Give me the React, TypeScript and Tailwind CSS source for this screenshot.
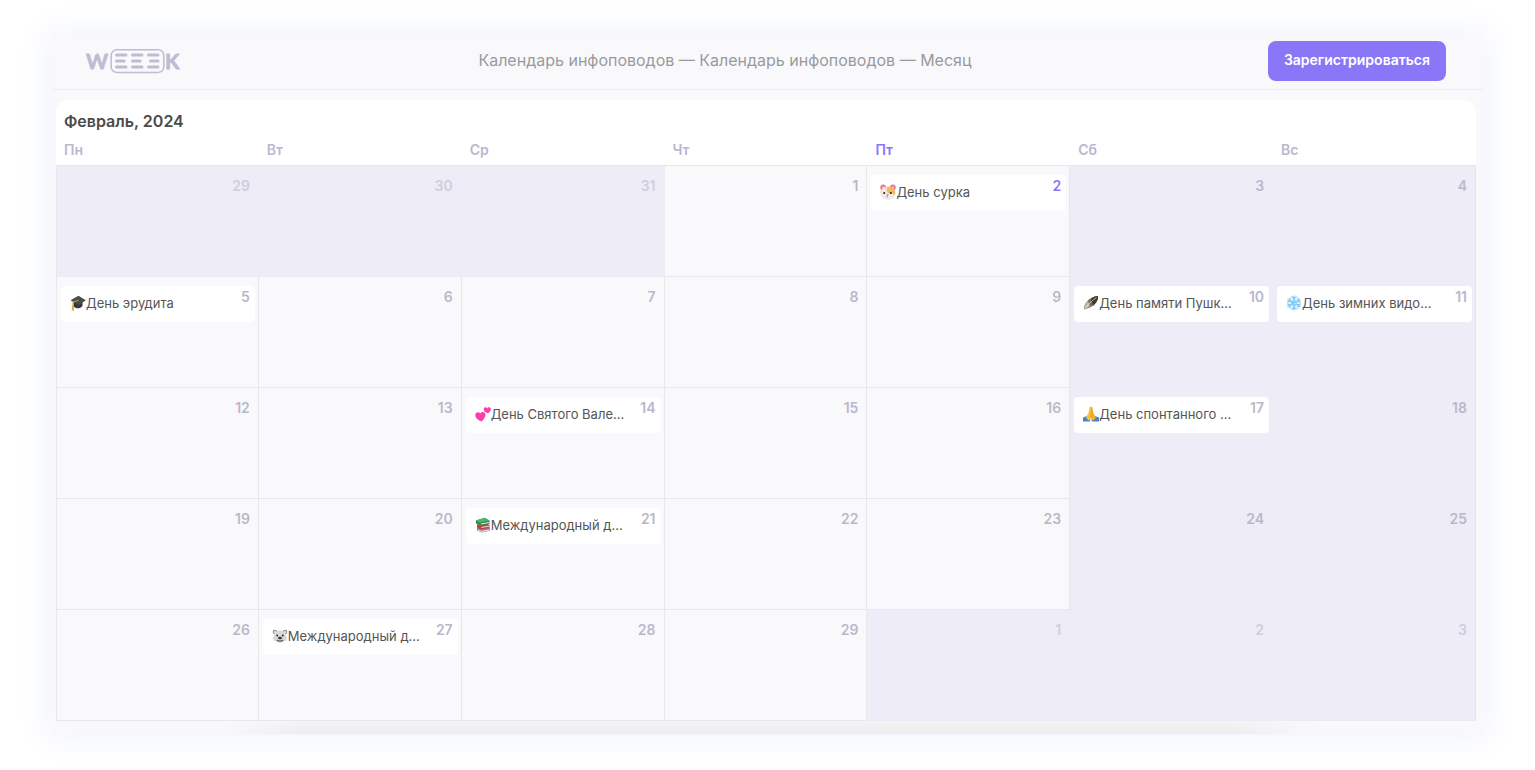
import { ReactNode } from "react";
import clsx from "clsx";

interface CalendarEvent {
  title: string;
  icon: ReactNode;
}

interface Day {
  day: number;
  muted?: boolean; // day of the previous or the next month
  event?: CalendarEvent;
}

const TODAY = 2;
const WEEKDAYS = ["Пн", "Вт", "Ср", "Чт", "Пт", "Сб", "Вс"];

// ICONS (16x16)
const hamster = (
  <>
    <circle cx="3.2" cy="3.4" r="2.9" fill="#e8788c" />
    <circle cx="12.8" cy="3.4" r="2.9" fill="#e8788c" />
    <circle cx="3.4" cy="3.8" r="1.5" fill="#f9b9c0" />
    <circle cx="12.6" cy="3.8" r="1.5" fill="#f9b9c0" />
    <ellipse cx="8" cy="9" rx="7.4" ry="6.3" fill="#f6b765" />
    <path d="M.6 9C1 5 4 3 7 3c-1 3 0 5 1 6 2 1 5 0 7 2-.5 3-3 4.500-7 4.500S.6 13 .6 9z" fill="#eeebe6" />
    <circle cx="4.2" cy="9" r="1" fill="#222" />
    <circle cx="10.8" cy="9" r="1" fill="#222" />
    <ellipse cx="7.4" cy="11" rx="1.2" ry=".8" fill="#e77a7f" />
    <path d="M7.4 11.6v2" stroke="#9a6a50" strokeWidth=".6" />
  </>
);

const graduationCap = (
  <>
    <path d="M3.5 7v4.5c2.5 2.4 6.5 2.7 9-.5V6z" fill="#34373a" />
    <path d="M.5 5.2 8.5.8l7.3 4.4-7 5z" fill="#484c4f" />
    <path d="M8.5 5.2 3 7.2v4" stroke="#e79b32" fill="none" />
    <path d="M2.2 10h1.6l.3 5.5H1.7z" fill="#f0a436" />
  </>
);

const feather = (
  <>
    <path d="M1 14.5C1 8 6 2 15 1c.5 5-4 11-11 12.5z" fill="#776f5d" />
    <path d="M8 4c2-2 4-2.8 7-3 .3 4-2 7.5-5 9.7z" fill="#423a2c" />
    <path d="M1.5 13.5C1.5 10.5 3 8 5 6l2 5.5c-1.3.8-3 1.600-4 1.8z" fill="#c2bba9" />
    <path d="M.8 15.2C4 11 8 6 13.5 2.5" stroke="#ece7da" strokeWidth=".7" fill="none" />
  </>
);

const snowflake = (
  <g stroke="#7cc8f3" strokeWidth="1.1" strokeLinecap="round" fill="none">
    <circle cx="8" cy="8" r="7" fill="#dff2fd" stroke="none" />
    <path d="M8 .8v14.4M1.8 4.4l12.4 7.2M1.8 11.6l12.4-7.2" />
    <path d="m5.8 1.8 2.2 2 2.2-2M5.8 14.2l2.2-2 2.2 2M1.5 7l2.9-.9-.7-2.9M14.5 9l-2.9.9.7 2.9M1.5 9l2.9.9-.7 2.9M14.5 7l-2.9-.9.7-2.9" />
    <circle cx="8" cy="8" r="2.3" />
  </g>
);

const hearts = (
  <>
    <path d="M6.500 15.5C2.5 14 .2 11.700.3 8.900c.1-2.700 3.500-3.600 4.900-1.300 1.800-2.600 5.400-1.500 5.300 1.100-.1 2.500-1.800 4.800-4 6.800z" fill="#fb3fa8" />
    <path d="M13.3 7.200C10.500 6.500 8.500 5 8.700 2.900c.2-1.900 2.700-2.200 3.500-.5C13 .6 15.700.8 15.800 2.800c0 1.700-1.100 3.200-2.500 4.400z" fill="#fb3fa8" />
  </>
);

const books = (
  <>
    <path d="m2 11 10-1.5 3 1.8v2.5l-8.500 1.700L2 13.5z" fill="#8c86a5" />
    <path d="m3 13 3.5 1.4 8-1.5" stroke="#eee" fill="none" />
    <path d="m2 7.5 10-1L14.500 8v3l-9 1.500-3.500-2z" fill="#d2393f" />
    <path d="m6.5 10.400 7.500-1.200" stroke="#f3dcd6" />
    <path d="m.8 3.5 9-2.7 4.700 2.7V7L5 8.500l-4-2z" fill="#2f8d50" />
    <path d="m.8 3.5 9-2.7 4.700 2.7L5 5.500z" fill="#56b36b" />
    <path d="m6 6.900 8-1.300" stroke="#e9eee5" />
  </>
);

const hands = (
  <>
    <path d="M0 11.500 4 10l3.500 3.500-.5 2H0zM16 11.500 12 10l-3.500 3.500.5 2h7z" fill="#4a86c5" />
    <path d="M7.800.5c-1 0-1.300 1-1.500 2.500L5.500 7 3 11.500l2.500 3c1.600-.5 2.300-1.700 2.500-3z" fill="#fbc33b" />
    <path d="M8.200.5c1 0 1.300 1 1.500 2.500l.8 4 2.500 4.500-2.500 3C8.900 14 8.200 12.800 8 11.500z" fill="#f3ac2c" />
    <path d="M8 1v11" stroke="#d28c22" strokeWidth=".6" />
  </>
);

const polarBear = (
  <>
    <circle cx="3" cy="4" r="2.3" fill="#96999b" />
    <circle cx="13" cy="4" r="2.3" fill="#96999b" />
    <circle cx="3.2" cy="4.3" r="1.2" fill="#dfe1e2" />
    <circle cx="12.8" cy="4.3" r="1.2" fill="#dfe1e2" />
    <path d="M8 2.500c4 0 5.500 2.500 6 5.500.8 1 1.500 2 1.200 3C14 13.500 11 14.500 8 14.500S2 13.500.8 11C.5 10 1.200 9 2 8c.5-3 2-5.500 6-5.500z" fill="#d7d9da" />
    <circle cx="5.2" cy="7.5" r=".9" fill="#222" />
    <circle cx="10.8" cy="7.5" r=".9" fill="#222" />
    <ellipse cx="8" cy="10" rx="1.9" ry="1.3" fill="#2c2d2e" />
    <path d="M5 12c1.500 1.500 4.500 1.500 6 0" stroke="#55585a" strokeWidth="1.2" fill="none" />
  </>
);

const WEEKS: Day[][] = [
  [
    { day: 29, muted: true },
    { day: 30, muted: true },
    { day: 31, muted: true },
    { day: 1 },
    { day: 2, event: { title: "День сурка", icon: hamster } },
    { day: 3 },
    { day: 4 },
  ],
  [
    { day: 5, event: { title: "День эрудита", icon: graduationCap } },
    { day: 6 },
    { day: 7 },
    { day: 8 },
    { day: 9 },
    { day: 10, event: { title: "День памяти Пушк...", icon: feather } },
    { day: 11, event: { title: "День зимних видо...", icon: snowflake } },
  ],
  [
    { day: 12 },
    { day: 13 },
    { day: 14, event: { title: "День Святого Вале...", icon: hearts } },
    { day: 15 },
    { day: 16 },
    { day: 17, event: { title: "День спонтанного ...", icon: hands } },
    { day: 18 },
  ],
  [
    { day: 19 },
    { day: 20 },
    { day: 21, event: { title: "Международный д...", icon: books } },
    { day: 22 },
    { day: 23 },
    { day: 24 },
    { day: 25 },
  ],
  [
    { day: 26 },
    { day: 27, event: { title: "Международный д...", icon: polarBear } },
    { day: 28 },
    { day: 29 },
    { day: 1, muted: true },
    { day: 2, muted: true },
    { day: 3, muted: true },
  ],
];

function Logo() {
  return (
    <svg width="96" height="36" viewBox="0 -5 96 36" role="img" aria-label="WEEEK" fill="#bfbcd2" stroke="#bfbcd2" strokeLinejoin="round">
      <text x="0" y="21" fontSize="21" fontWeight="700" fontFamily="Lato, sans-serif" strokeWidth=".8">W</text>
      <rect x="25.2" y="1.8" width="52.6" height="22.6" rx="5.5" fill="none" strokeWidth="1.5" />
      <path
        d="M30.5 7H40M30.5 13H38M30.5 19H40M46.5 7H56M46.5 13H54M46.5 19H56M62.5 7H72M64.5 13H72M62.5 19H72"
        strokeWidth="3"
        strokeLinecap="round"
      />
      <text x="79" y="21" fontSize="21" fontWeight="700" fontFamily="Lato, sans-serif" strokeWidth=".8">K</text>
    </svg>
  );
}

function EventCard({ event }: { event: CalendarEvent }) {
  return (
    <div className="flex h-9 items-center rounded bg-white pb-0.5 pl-[9px]">
      <svg className="h-4 w-4 shrink-0" viewBox="0 0 16 16" aria-hidden="true">
        {event.icon}
      </svg>
      <span className="whitespace-nowrap text-[13px] leading-5 text-[#555555]">{event.title}</span>
    </div>
  );
}

function DayCell({ item, column }: { item: Day; column: number }) {
  const shaded = item.muted || column > 4;
  const isToday = item.day === TODAY && !item.muted;

  return (
    <td
      className={clsx(
        "relative h-[111px] border-b border-r p-0 align-top",
        shaded ? "bg-[#eeecf6]" : "border-[#e8e8ec] bg-[#f9f9fc]",
        shaded && (column === 6 ? "border-r-[#e4e3ec]" : "border-r-[#ecebf4]"),
        shaded && "border-b-[#ecebf4]",
        column === 0 && "border-l border-l-[#e8e8ec]"
      )}
    >
      <div className="pl-1 pr-[3px] pt-[9px]">{item.event && <EventCard event={item.event} />}</div>
      <span
        className={clsx(
          "absolute right-2 top-2.5 text-sm font-semibold leading-5",
          isToday ? "text-[#8977f8]" : item.muted ? "text-[#d0cedc]" : "text-[#b9b8ca]"
        )}
      >
        {item.day}
      </span>
    </td>
  );
}

export default function App() {
  return (
    <div className="min-h-screen bg-white px-[52px] pb-9 pt-9 font-['Inter','Noto_Sans',sans-serif]">
      <div className="bg-[#f9f9fc] shadow-[0_0_32px_8px_#f3f5ff]">
        <header className="flex items-center justify-between border-b border-[#ededf1] pb-2 pl-[34px] pr-[37px] pt-[5px]">
          <a href="#" className="block">
            <Logo />
          </a>
          <h1 className="pb-0.5 text-base text-[#9a9a9e]">
            Календарь инфоповодов — Календарь инфоповодов — Месяц
          </h1>
          <button
            type="button"
            className="h-10 rounded-lg bg-[#8977f8] px-4 pb-0.5 text-sm font-semibold text-white"
          >
            Зарегистрироваться
          </button>
        </header>

        <main className="pl-1 pr-[7px] pt-2.5">
          <section className="rounded-t-xl bg-white">
            <h2 className="px-2 pb-[5px] pt-[9px] text-base leading-6 font-semibold text-[#4b4b4b]">Февраль, 2024</h2>
            <table className="w-full table-fixed border-separate border-spacing-0">
              <thead>
                <tr>
                  {WEEKDAYS.map((name, i) => (
                    <th
                      key={name}
                      scope="col"
                      className={clsx(
                        "h-7 border-b border-[#e8e8ec] px-2 pb-1 text-left text-sm font-semibold",
                        i === 4 ? "text-[#8977f8]" : "text-[#b9b8d0]"
                      )}
                    >
                      {name}
                    </th>
                  ))}
                </tr>
              </thead>
              <tbody>
                {WEEKS.map((week, w) => (
                  <tr key={w}>
                    {week.map((item, i) => (
                      <DayCell key={i} item={item} column={i} />
                    ))}
                  </tr>
                ))}
              </tbody>
            </table>
          </section>
        </main>
        {/* shade under the table */}
        <div className="mx-[168px] h-[13px] bg-[linear-gradient(90deg,#f9f9fc,transparent_8%,transparent_92%,#f9f9fc),linear-gradient(#f4f4f6,#ececed)]" />
      </div>
    </div>
  );
}
